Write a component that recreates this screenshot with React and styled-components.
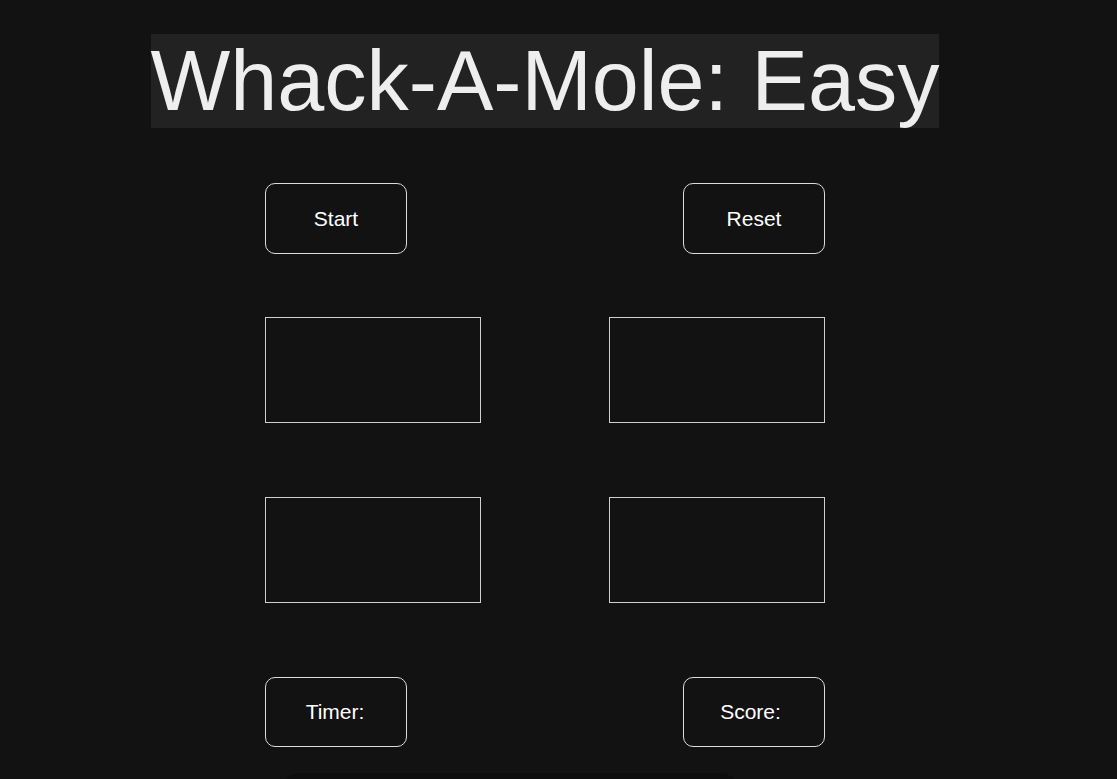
import React from 'react';
import styled, { createGlobalStyle } from 'styled-components';

const GlobalStyle = createGlobalStyle`
  html, body {
    margin: 0;
    padding: 0;
    background: #121212;
    color: #eeeeee;
    font-family: "Liberation Sans", Arial, sans-serif;
  }
`;

const Page = styled.div`
  width: 1090px;
  min-height: 779px;
  display: flex;
  flex-direction: column;
  align-items: center;
  padding-top: 34px;
  box-sizing: border-box;
  overflow: hidden;
`;

const Title = styled.h1`
  margin: 0;
  background: #222222;
  color: #eeeeee;
  font-size: 84.5px;
  font-weight: 400;
  line-height: 94px;
  height: 94px;
  white-space: nowrap;
`;

const Board = styled.div`
  width: 560px;
  margin-top: 55px;
  display: flex;
  flex-direction: column;
`;

const Row = styled.div`
  display: flex;
  justify-content: space-between;
  margin-top: ${props => props.gap || 0}px;
`;

const Button = styled.button`
  width: 142px;
  height: ${props => props.tall ? 71 : 70}px;
  background: #121212;
  color: #ffffff;
  border: 1px solid #dcdcdc;
  border-radius: 10px;
  font-family: "Liberation Sans", Arial, sans-serif;
  font-size: 21px;
  padding: 0 ${props => props.trail || 0}px 0 0;
  cursor: pointer;
`;

const Hole = styled.div`
  width: 216px;
  height: 106px;
  box-sizing: border-box;
  border: 1px solid #cfcfcf;
  background: #121212;
`;

const Shadow = styled.div`
  align-self: flex-start;
  width: 460px;
  height: 40px;
  margin-top: 26px;
  margin-left: 280px;
  border-radius: 20px 20px 0 0;
  background: #0d0d0d;
`;

export default function App() {
  return (
    <>
      <GlobalStyle />
      <Page>
        <Title>Whack-A-Mole: Easy</Title>
        <Board>
          <Row>
            <Button tall>Start</Button>
            <Button tall>Reset</Button>
          </Row>
          <Row gap={63}>
            <Hole />
            <Hole />
          </Row>
          <Row gap={74}>
            <Hole />
            <Hole />
          </Row>
          <Row gap={74}>
            <Button trail={2}>Timer:</Button>
            <Button trail={7}>Score:</Button>
          </Row>
        </Board>
        <Shadow />
      </Page>
    </>
  );
}
